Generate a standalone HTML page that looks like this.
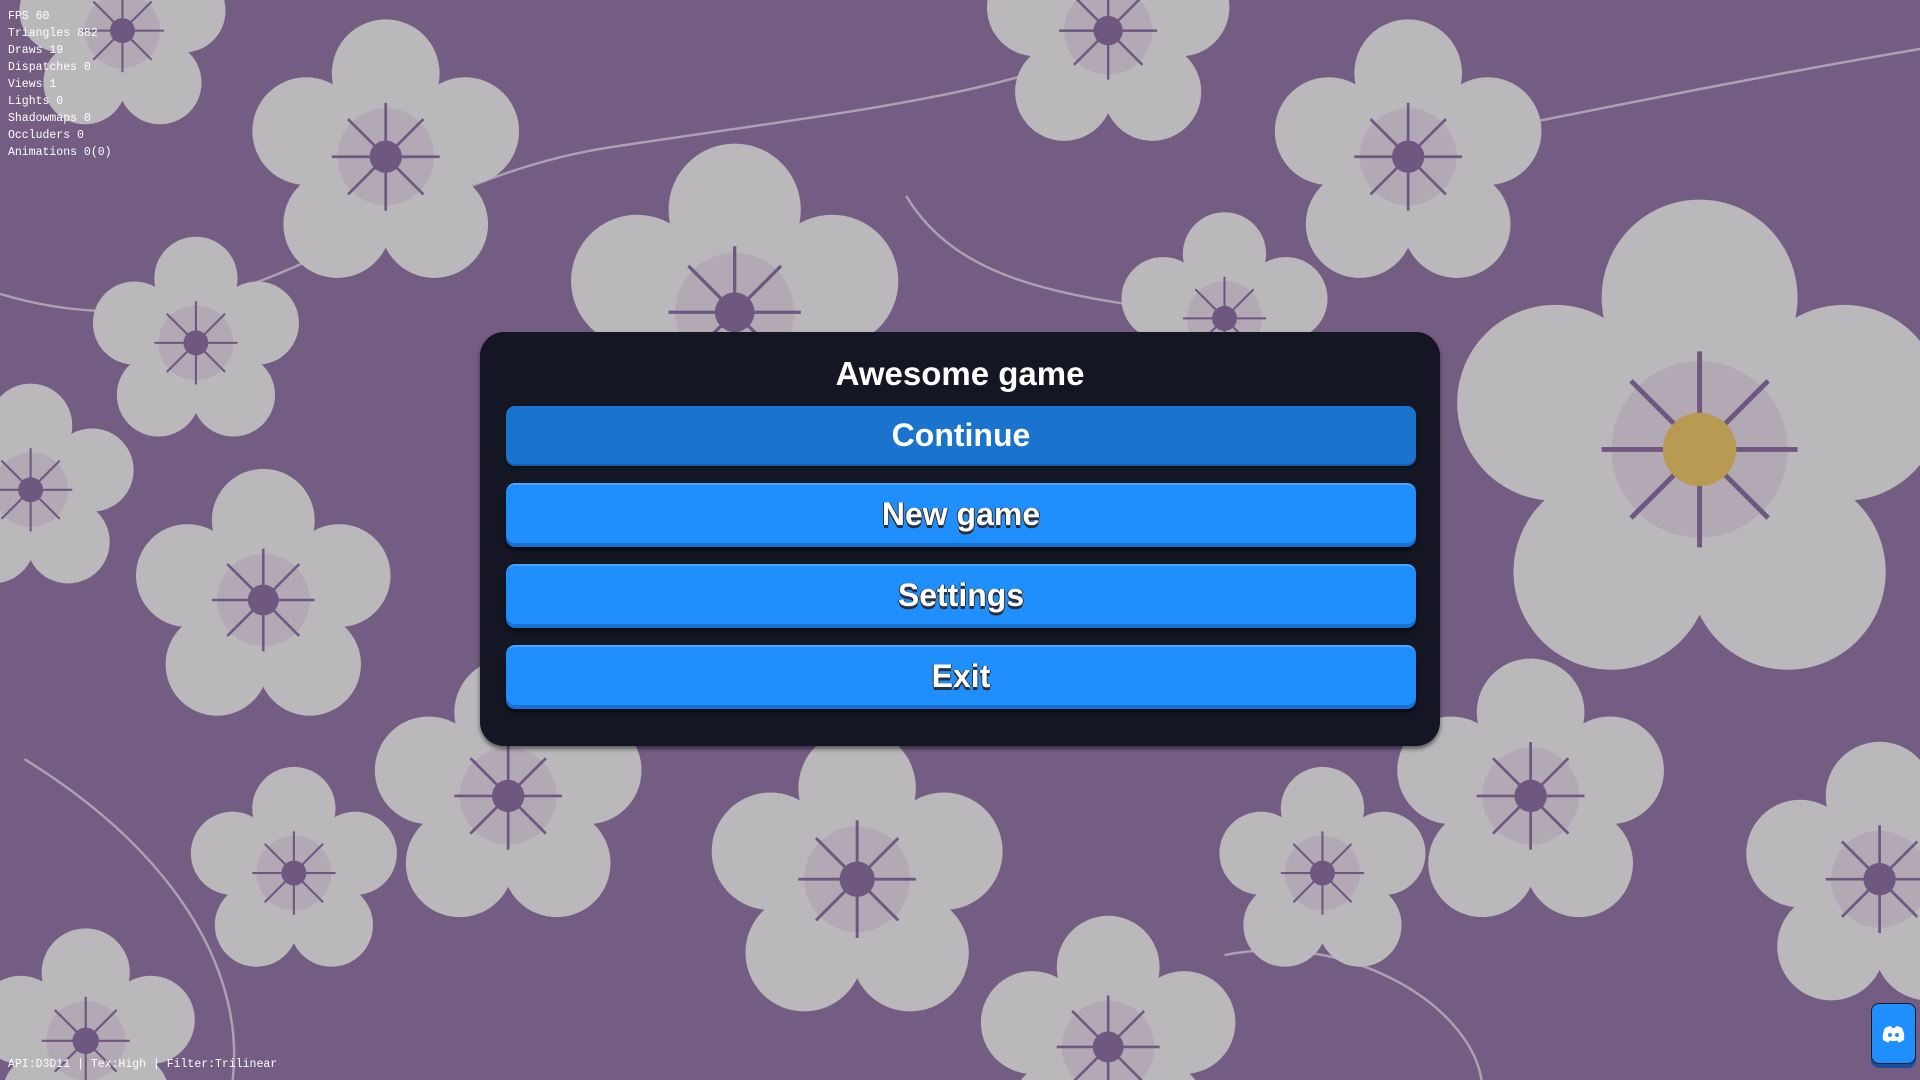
<!DOCTYPE html>
<html><head><meta charset="utf-8"><style>
html,body{margin:0;padding:0;width:1920px;height:1080px;overflow:hidden;background:#745d82;}
#wrap{position:relative;width:1920px;height:1080px;overflow:hidden;}
#bg{position:absolute;left:0;top:0;width:1920px;height:1080px;}
#dbg{position:absolute;left:8px;top:8px;font:11.5px/17px "Liberation Mono",monospace;color:#fff;white-space:pre;}
#api{position:absolute;left:8px;top:1058px;font:11.5px/14px "Liberation Mono",monospace;color:#fff;}
#panel{position:absolute;left:480px;top:332px;width:960px;height:414px;background:#141623;border-radius:24px;box-shadow:0 3px 4px rgba(0,0,0,.5);}
#title{position:absolute;left:0;width:960px;top:23px;text-align:center;font:bold 33px "Liberation Sans",sans-serif;color:#fff;}
.btn{position:absolute;left:26px;width:910px;height:58px;background:#1f8ffd;border-radius:9px;border-top:2px solid #4aa6ff;box-shadow:0 4px 0 #1570cf,0 7px 4px rgba(0,0,0,.6);text-align:center;font:bold 32px/58px "Liberation Sans",sans-serif;color:#fff;text-shadow:0 3px 0 #2a2f3e,1px 0 0 #333,-1px 0 0 #333;}
#cont{background:#1a73cc;border-top:none;box-shadow:0 2px 0 #1560ad,0 3px 3px rgba(0,0,0,.5);text-shadow:none;}
#disc{position:absolute;left:1871px;top:1003px;width:43px;height:59px;background:#1f8ffd;border-radius:8px;border:1px solid #1a1a2a;box-shadow:0 4px 0 #1a4f99;}
</style></head><body><div id="wrap">
<svg id="bg" viewBox="0 0 1568 882" preserveAspectRatio="none">
<defs>
<g id="f">
<circle cx="0" cy="-0.62" r="0.4" fill="#bab8bb"/>
<circle cx="0.59" cy="-0.19" r="0.4" fill="#bab8bb"/>
<circle cx="0.36" cy="0.5" r="0.4" fill="#bab8bb"/>
<circle cx="-0.36" cy="0.5" r="0.4" fill="#bab8bb"/>
<circle cx="-0.59" cy="-0.19" r="0.4" fill="#bab8bb"/>
<circle cx="0" cy="0" r="0.4" fill="#bab8bb"/>
<circle cx="0" cy="0" r="0.36" fill="#a996ae" opacity="0.45"/>
<g stroke="#6e5880" stroke-width="0.02">
<line x1="0" y1="-0.4" x2="0" y2="0.4"/><line x1="-0.4" y1="0" x2="0.4" y2="0"/>
<line x1="-0.28" y1="-0.28" x2="0.28" y2="0.28"/><line x1="-0.28" y1="0.28" x2="0.28" y2="-0.28"/>
</g>
<circle cx="0" cy="0" r="0.12" fill="#6e5880"/>
</g>
</defs>
<g fill="none" stroke="#c4bfc8" stroke-width="2" opacity="0.7">
<path d="M0 240 C200 300 300 150 500 120 S800 80 900 40"/>
<path d="M1200 110 C1350 80 1450 60 1568 40"/>
<path d="M740 160 C800 260 950 240 1100 280"/>
<path d="M20 620 C150 700 200 800 190 882"/>
<path d="M1000 780 C1100 760 1200 820 1210 882"/>
</g>
<use href="#f" transform="translate(100,25) scale(85)"/>
<use href="#f" transform="translate(315,128) scale(110)"/>
<use href="#f" transform="translate(905,25) scale(100)"/>
<use href="#f" transform="translate(1150,128) scale(110)"/>
<use href="#f" transform="translate(160,280) scale(85)"/>
<use href="#f" transform="translate(25,400) scale(85)"/>
<use href="#f" transform="translate(215,490) scale(105)"/>
<use href="#f" transform="translate(600,255) scale(135)"/>
<use href="#f" transform="translate(1000,260) scale(85)"/>
<use href="#f" transform="translate(1388,367) scale(200)"/>
<use href="#f" transform="translate(415,650) scale(110)"/>
<use href="#f" transform="translate(700,718) scale(120)"/>
<use href="#f" transform="translate(1250,650) scale(110)"/>
<use href="#f" transform="translate(240,713) scale(85)"/>
<use href="#f" transform="translate(1080,713) scale(85)"/>
<use href="#f" transform="translate(1535,718) scale(110)"/>
<use href="#f" transform="translate(905,855) scale(105)"/>
<use href="#f" transform="translate(70,850) scale(90)"/>
<circle cx="1388" cy="367" r="30" fill="#b89a52"/>
</svg>
<div id="dbg">FPS 60
Triangles 882
Draws 19
Dispatches 0
Views 1
Lights 0
Shadowmaps 0
Occluders 0
Animations 0(0)</div>
<div id="api">API:D3D11 | Tex:High | Filter:Trilinear</div>
<div id="panel">
<div id="title">Awesome game</div>
<div class="btn" id="cont" style="top:74px">Continue</div>
<div class="btn" style="top:151px">New game</div>
<div class="btn" style="top:232px">Settings</div>
<div class="btn" style="top:313px">Exit</div>
</div>
<div id="disc"><svg width="43" height="59" viewBox="0 0 43 59"><path d="M13 24 Q17 22 19 22 L20 24 Q21.5 23.7 23 24 L24 22 Q26 22 30 24 Q33 30 32 36 Q29 38 26.5 38.5 L25.5 36.5 Q21.5 37.5 17.5 36.5 L16.5 38.5 Q14 38 11 36 Q10 30 13 24Z" fill="#fff"/><circle cx="18" cy="31" r="2" fill="#1f8ffd"/><circle cx="25" cy="31" r="2" fill="#1f8ffd"/></svg></div>
</div></body></html>
